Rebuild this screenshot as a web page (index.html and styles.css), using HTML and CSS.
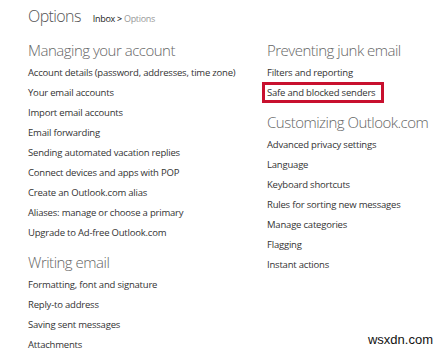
FILE: index.html
```html
<!DOCTYPE html>
<html lang="en">
<head>
    <meta charset="UTF-8">
    <title>Options</title>
    <link rel="stylesheet" href="styles.css">
</head>
<body>
    <div class="top">
        <h1>Options</h1>
        <div class="crumbs"><span class="crumb-home">Inbox</span> <span class="sep">&gt;</span> <span class="crumb-here">Options</span></div>
    </div>
    <div class="columns">
        <div class="col">
            <h2>Managing your account</h2>
            <ul>
                <li>Account details (password, addresses, time zone)</li>
                <li>Your email accounts</li>
                <li>Import email accounts</li>
                <li>Email forwarding</li>
                <li>Sending automated vacation replies</li>
                <li>Connect devices and apps with POP</li>
                <li>Create an Outlook.com alias</li>
                <li>Aliases: manage or choose a primary</li>
                <li>Upgrade to Ad-free Outlook.com</li>
            </ul>
            <h2>Writing email</h2>
            <ul>
                <li>Formatting, font and signature</li>
                <li>Reply-to address</li>
                <li>Saving sent messages</li>
                <li>Attachments</li>
            </ul>
        </div>
        <div class="col">
            <h2>Preventing junk email</h2>
            <ul>
                <li>Filters and reporting</li>
                <li class="marked"><span>Safe and blocked senders</span></li>
            </ul>
            <h2>Customizing Outlook.com</h2>
            <ul>
                <li>Advanced privacy settings</li>
                <li>Language</li>
                <li>Keyboard shortcuts</li>
                <li>Rules for sorting new messages</li>
                <li>Manage categories</li>
                <li>Flagging</li>
                <li>Instant actions</li>
            </ul>
        </div>
    </div>
    <div class="mark">wsxdn.com</div>
</body>
</html>
```

FILE: styles.css
```css
html {
    overflow: hidden;
}
body {
    margin: 0;
    padding: 5px 0 0 28px;
    font-family: "Open Sans", sans-serif;
    color: #333;
    background: #fff;
}
.top {
    display: flex;
    align-items: baseline;
    gap: 12px;
}
h1 {
    margin: 0;
    font-size: 16px;
    line-height: 22px;
    font-weight: 300;
    letter-spacing: -0.6px;
    color: #555;
}
.crumbs {
    font-size: 9px;
    letter-spacing: -0.3px;
    color: #222;
}
.sep {
    font-weight: 600;
}
.crumb-here {
    color: #999;
}
.columns {
    display: grid;
    grid-template-columns: 239px 1fr;
    padding-top: 4px;
}
h2 {
    margin: 8px 0 2px;
    font-size: 15px;
    font-weight: 300;
    letter-spacing: -0.5px;
    color: #666;
    line-height: 22px;
    white-space: nowrap;
}
ul {
    list-style: none;
    margin: 0;
    padding: 0;
}
li {
    font-size: 9.5px;
    letter-spacing: -0.2px;
    line-height: 20px;
    white-space: nowrap;
}
.marked {
    margin-bottom: 2px;
}
.marked span {
    margin-left: -5px;
    padding: 1px 6px 1px 2px;
    border: 3px solid #c8102e;
}
.mark {
    position: absolute;
    right: 7px;
    bottom: 5px;
    font-family: "Liberation Sans", Arial, sans-serif;
    font-size: 13px;
    color: #111;
}
```
